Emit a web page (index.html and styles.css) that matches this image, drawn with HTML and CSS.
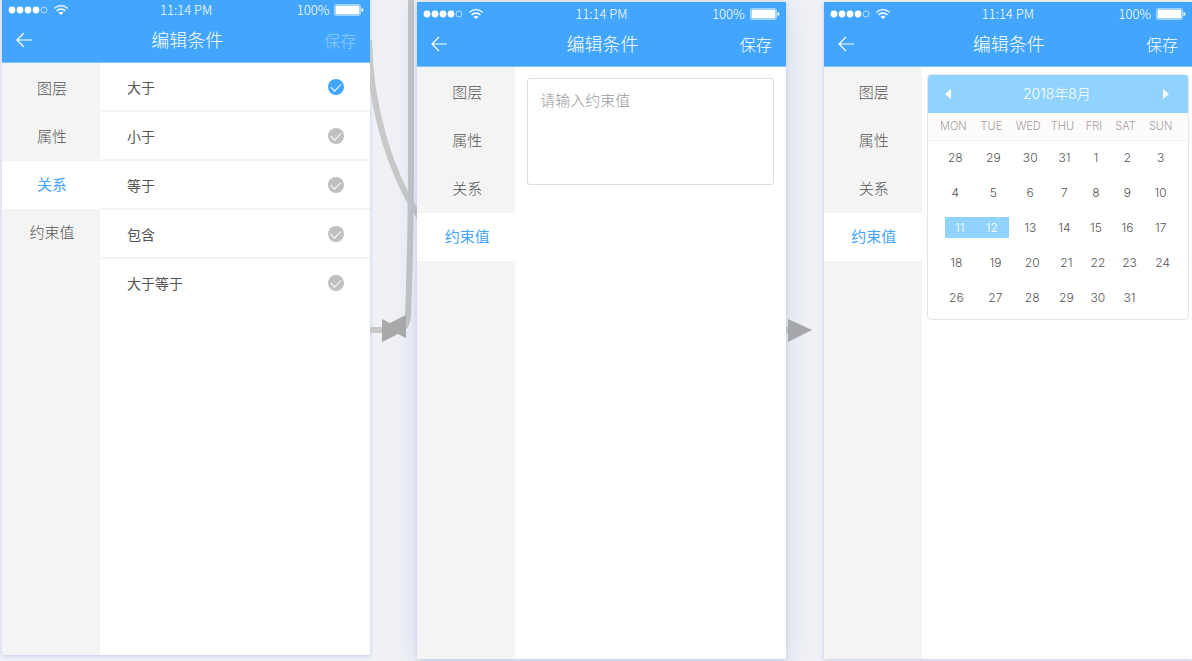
FILE: index.html
```html
<!DOCTYPE html>
<html lang="zh-CN">
<head>
    <meta charset="UTF-8">
    <meta name="viewport" content="width=device-width, initial-scale=1.0">
    <title>编辑条件</title>
    <link rel="stylesheet" href="styles.css">
</head>
<body>
    <svg class="symbols" aria-hidden="true">
        <symbol id="signal" viewBox="0 0 62 12">
            <g fill="#fff">
                <circle cx="4" cy="6" r="3.4"/>
                <circle cx="12" cy="6" r="3.4"/>
                <circle cx="20" cy="6" r="3.4"/>
                <circle cx="28" cy="6" r="3.4"/>
            </g>
            <circle cx="36" cy="6" r="3" fill="none" stroke="#fff" stroke-width=".6"/>
            <g fill="none" stroke="#fff" stroke-width="1.5">
                <path d="M46.3 4.3Q53-1.2 59.7 4.3" stroke-opacity=".8"/>
                <path d="M48.6 6.9Q53 3.2 57.4 6.9"/>
            </g>
            <path d="M50.5 8.7Q53 6.9 55.5 8.7L53 11z" fill="#fff"/>
        </symbol>
        <symbol id="battery" viewBox="0 0 30 12">
            <rect x=".5" y=".5" width="26" height="11" rx="1.5" fill="none" stroke="#fff" stroke-opacity=".5"/>
            <rect x="1.5" y="1.5" width="24" height="9" rx=".5" fill="#fff"/>
            <path d="M27.5 4Q29.5 4.5 29.5 6T27.5 8z" fill="#fff"/>
        </symbol>
        <symbol id="back" viewBox="0 0 16 16">
            <path d="M8 1L1 8l7 7M1 8h15" fill="none" stroke="#fff" stroke-width="1.2"/>
        </symbol>
    </svg>

    <main class="board">
        <section class="phone phone-first">
            <header class="header">
                <div class="status">
                    <svg class="signal"><use href="#signal"/></svg>
                    <span>11:14 PM</span>
                    <span class="power">100% <svg class="battery"><use href="#battery"/></svg></span>
                </div>
                <div class="nav">
                    <button class="back" type="button" aria-label="返回"><svg><use href="#back"/></svg></button>
                    <h1>编辑条件</h1>
                    <button class="save" type="button" disabled>保存</button>
                </div>
            </header>
            <div class="content">
                <nav class="tabs">
                    <button type="button">图层</button>
                    <button type="button">属性</button>
                    <button type="button" class="active">关系</button>
                    <button type="button">约束值</button>
                </nav>
                <form class="options">
                    <label>大于<input type="radio" name="relation" checked></label>
                    <label>小于<input type="radio" name="relation"></label>
                    <label>等于<input type="radio" name="relation"></label>
                    <label>包含<input type="radio" name="relation"></label>
                    <label>大于等于<input type="radio" name="relation"></label>
                </form>
            </div>
        </section>

        <svg class="connector" viewBox="0 0 47 661" preserveAspectRatio="xMinYMin slice" aria-hidden="true">
            <path d="M-1 40C0 110 22 176 50 218" fill="none" stroke="#c8c8c8" stroke-width="6"/>
            <path d="M41 -2V150C41 230 39 290 38 315Q37 327 33 327" fill="none" stroke="#c4c4c6" stroke-width="6"/>
            <path d="M0 330H14" stroke="#c8c8c8" stroke-width="6"/>
            <path d="M12 319L20 323 36 315V338L28 334 12 342z" fill="#a9a9a9"/>
        </svg>

        <section class="phone phone-middle">
            <header class="header">
                <div class="status">
                    <svg class="signal"><use href="#signal"/></svg>
                    <span>11:14 PM</span>
                    <span class="power">100% <svg class="battery"><use href="#battery"/></svg></span>
                </div>
                <div class="nav">
                    <button class="back" type="button" aria-label="返回"><svg><use href="#back"/></svg></button>
                    <h1>编辑条件</h1>
                    <button class="save" type="button">保存</button>
                </div>
            </header>
            <div class="content">
                <nav class="tabs">
                    <button type="button">图层</button>
                    <button type="button">属性</button>
                    <button type="button">关系</button>
                    <button type="button" class="active">约束值</button>
                </nav>
                <form class="entry">
                    <textarea aria-label="约束值" placeholder="请输入约束值"></textarea>
                </form>
            </div>
        </section>

        <svg class="connector connector-front" viewBox="0 0 38 661" preserveAspectRatio="xMinYMin slice" aria-hidden="true">
            <path d="M0 330H4" stroke="#b9bcc2" stroke-width="6"/>
            <path d="M2 319L26 330 2 342z" fill="#a5a7aa"/>
        </svg>

        <section class="phone">
            <header class="header">
                <div class="status">
                    <svg class="signal"><use href="#signal"/></svg>
                    <span>11:14 PM</span>
                    <span class="power">100% <svg class="battery"><use href="#battery"/></svg></span>
                </div>
                <div class="nav">
                    <button class="back" type="button" aria-label="返回"><svg><use href="#back"/></svg></button>
                    <h1>编辑条件</h1>
                    <button class="save" type="button">保存</button>
                </div>
            </header>
            <div class="content">
                <nav class="tabs">
                    <button type="button">图层</button>
                    <button type="button">属性</button>
                    <button type="button">关系</button>
                    <button type="button" class="active">约束值</button>
                </nav>
                <div class="date">
                    <div class="calendar">
                        <div class="month">
                            <button type="button" aria-label="上个月"><svg viewBox="0 0 6 10"><path d="M6 0V10L0 5z"/></svg></button>
                            <h2>2018年8月</h2>
                            <button type="button" aria-label="下个月"><svg viewBox="0 0 6 10"><path d="M0 0V10L6 5z"/></svg></button>
                        </div>
                        <table>
                            <colgroup>
                                <col class="edge-start"><col class="wide"><col class="wide"><col class="narrow"><col class="narrow"><col class="narrow"><col class="edge-end">
                            </colgroup>
                            <thead>
                                <tr><th>MON</th><th>TUE</th><th>WED</th><th>THU</th><th>FRI</th><th>SAT</th><th>SUN</th></tr>
                            </thead>
                            <tbody>
                                <tr><td>28</td><td>29</td><td>30</td><td>31</td><td>1</td><td>2</td><td>3</td></tr>
                                <tr><td>4</td><td>5</td><td>6</td><td>7</td><td>8</td><td>9</td><td>10</td></tr>
                                <tr><td><span class="picked first">11</span></td><td><span class="picked last">12</span></td><td>13</td><td>14</td><td>15</td><td>16</td><td>17</td></tr>
                                <tr class="late"><td>18</td><td>19</td><td>20</td><td>21</td><td>22</td><td>23</td><td>24</td></tr>
                                <tr class="late"><td>26</td><td>27</td><td>28</td><td>29</td><td>30</td><td>31</td><td></td></tr>
                            </tbody>
                        </table>
                    </div>
                </div>
            </div>
        </section>
    </main>
</body>
</html>
```

FILE: styles.css
```css
* {
    box-sizing: border-box;
}

body {
    margin: 0;
    background: #f0f1f6;
    font-family: "Noto Sans CJK SC", sans-serif;
    font-weight: 300;
    color: #555;
}

button, textarea {
    font: inherit;
    color: inherit;
    border: none;
    padding: 0;
    background: none;
}

h1, h2 {
    margin: 0;
    font-weight: 300;
}

.symbols {
    display: none;
}

.board {
    display: grid;
    grid-template-columns: 1fr 47px 1fr 38px 1fr;
    min-height: 100vh;
    padding-left: 2px;
    overflow: hidden;
}

.phone {
    display: flex;
    flex-direction: column;
    min-width: 0;
    margin: 2px 0;
    background: #fff;
    box-shadow: 0 1px 4px rgba(120, 150, 210, 0.4);
}

/* the first screen sits a little higher on the board */
.phone-first {
    margin: -2px 0 6px;
}

.phone-middle {
    box-shadow: 0 1px 4px rgba(120, 150, 210, 0.3), 0 4px 24px rgba(110, 150, 200, 0.25);
}

.connector {
    width: 100%;
    height: 661px;
}

.connector-front {
    z-index: 1;
}

.header {
    height: 65px;
    background: #42a6ff;
    border-bottom: 1px solid #7cc3ff;
    color: #fff;
}

.status {
    display: grid;
    grid-template-columns: 1fr auto 1fr;
    align-items: center;
    height: 23px;
    padding: 0 6px;
    font-size: 13px;
    line-height: 23px;
}

.signal {
    width: 62px;
    height: 12px;
}

.power {
    display: flex;
    justify-content: flex-end;
    align-items: center;
    gap: 5px;
}

.battery {
    width: 30px;
    height: 12px;
}

.nav {
    display: grid;
    grid-template-columns: 1fr auto 1fr;
    align-items: center;
    height: 38px;
    padding: 0 14px;
}

.nav h1 {
    font-size: 18px;
    line-height: 26px;
    padding: 0 0 3px 2px;
}

.back {
    justify-self: start;
    display: flex;
}

.back svg {
    width: 16px;
    height: 16px;
}

.save {
    justify-self: end;
    padding-bottom: 1px;
    font-size: 16px;
    line-height: 24px;
}

.save:disabled {
    opacity: 0.4;
}

.content {
    display: flex;
    flex: 1;
}

.tabs {
    display: flex;
    flex-direction: column;
    flex: 0 0 98px;
    padding-top: 2px;
    background: #f4f4f4;
}

.tabs button {
    height: 48px;
    padding: 0 0 3px 2px;
    font-size: 15px;
    color: #555;
}

.tabs .active {
    background: #fff;
    color: #42a6ff;
    font-weight: 400;
}

.options {
    flex: 1;
    padding-left: 1px;
}

.options label {
    display: flex;
    justify-content: space-between;
    align-items: center;
    height: 49px;
    padding: 0 26px;
    border-bottom: 2px solid #f3f3f3;
    font-size: 14px;
    font-weight: 400;
    line-height: 20px;
}

.options label:last-child {
    border-bottom-color: transparent;
}

.options input {
    display: grid;
    place-items: center;
    width: 16px;
    height: 16px;
    margin: 0;
    appearance: none;
    border-radius: 50%;
    background: #c0c0c0;
}

.options input:checked {
    background: #42a6ff;
}

.options input::after {
    content: "";
    width: 9px;
    height: 5px;
    margin-bottom: 2px;
    border: solid #fff;
    border-width: 0 0 1px 1px;
    transform: rotate(-45deg);
}

.entry {
    flex: 1;
    padding: 11px 12px;
}

.entry textarea {
    display: block;
    width: 100%;
    height: 107px;
    padding: 9px 12px;
    border: 1px solid #ddd;
    border-radius: 3px;
    font-size: 15px;
    line-height: 24px;
    resize: none;
}

.entry textarea::placeholder {
    color: #999;
}

.date {
    flex: 1;
    padding: 7px 3px 7px 5px;
}

.calendar {
    border: 1px solid #e6e6e6;
    border-radius: 4px;
    overflow: hidden;
    font-family: Inter, "Noto Sans CJK SC", sans-serif;
}

.month {
    display: flex;
    justify-content: space-between;
    align-items: center;
    height: 38px;
    padding: 0 19px 0 17px;
    background: #91d3ff;
    color: #fff;
}

.month h2 {
    font-size: 14px;
    line-height: 22px;
}

.month button {
    display: flex;
}

.month svg {
    width: 6px;
    height: 10px;
    fill: #fff;
}

.calendar table {
    width: 100%;
    table-layout: fixed;
    border-collapse: collapse;
    margin-bottom: 4px;
    font-size: 12px;
    text-align: center;
}

.edge-start {
    width: 18%;
}

.wide {
    width: 14%;
}

.narrow {
    width: 12%;
}

.edge-end {
    width: 17%;
}

.calendar th {
    height: 27px;
    padding: 0 4px 0 0;
    background: #fcfcfc;
    border-bottom: 1px solid #f0f0f0;
    color: #a89a9a;
    font-size: 11px;
    font-weight: 300;
}

.calendar td {
    height: 35px;
    padding: 0;
    color: #555;
    vertical-align: middle;
}

.calendar th:first-child {
    padding-left: 8px;
}

.calendar td:first-child {
    padding-left: 8px;
}

.calendar th:last-child,
.calendar td:last-child {
    padding-right: 10px;
}

.calendar .late td {
    padding-left: 4px;
}

.calendar .late td:first-child {
    padding-left: 10px;
}

.calendar .picked {
    display: block;
    background: #91d3ff;
    color: #fff;
    line-height: 21px;
}

.picked.first {
    margin-left: 9px;
}

.picked.last {
    margin-right: 3px;
}
```
